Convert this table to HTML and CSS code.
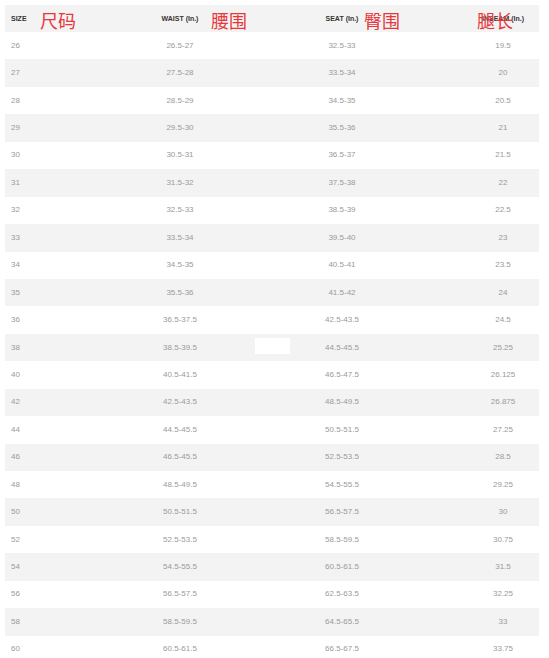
FILE: index.html
```html
<!DOCTYPE html>
<html lang="zh">
<head>
<meta charset="utf-8">
<title>Size chart</title>
<link rel="stylesheet" href="styles.css">
</head>
<body>
<div class="chart">
  <div class="row head">
    <div class="cell c1">SIZE</div>
    <div class="cell c2">WAIST (In.)</div>
    <div class="cell c3">SEAT (In.)</div>
    <div class="cell c4">INSEAM (In.)</div>
    <span class="note n1">尺码</span>
    <span class="note n2">腰围</span>
    <span class="note n3">臀围</span>
    <span class="note n4">腿长</span>
  </div>
  <div class="row"><div class="cell c1">26</div><div class="cell c2">26.5-27</div><div class="cell c3">32.5-33</div><div class="cell c4">19.5</div></div>
  <div class="row alt"><div class="cell c1">27</div><div class="cell c2">27.5-28</div><div class="cell c3">33.5-34</div><div class="cell c4">20</div></div>
  <div class="row"><div class="cell c1">28</div><div class="cell c2">28.5-29</div><div class="cell c3">34.5-35</div><div class="cell c4">20.5</div></div>
  <div class="row alt"><div class="cell c1">29</div><div class="cell c2">29.5-30</div><div class="cell c3">35.5-36</div><div class="cell c4">21</div></div>
  <div class="row"><div class="cell c1">30</div><div class="cell c2">30.5-31</div><div class="cell c3">36.5-37</div><div class="cell c4">21.5</div></div>
  <div class="row alt"><div class="cell c1">31</div><div class="cell c2">31.5-32</div><div class="cell c3">37.5-38</div><div class="cell c4">22</div></div>
  <div class="row"><div class="cell c1">32</div><div class="cell c2">32.5-33</div><div class="cell c3">38.5-39</div><div class="cell c4">22.5</div></div>
  <div class="row alt"><div class="cell c1">33</div><div class="cell c2">33.5-34</div><div class="cell c3">39.5-40</div><div class="cell c4">23</div></div>
  <div class="row"><div class="cell c1">34</div><div class="cell c2">34.5-35</div><div class="cell c3">40.5-41</div><div class="cell c4">23.5</div></div>
  <div class="row alt"><div class="cell c1">35</div><div class="cell c2">35.5-36</div><div class="cell c3">41.5-42</div><div class="cell c4">24</div></div>
  <div class="row"><div class="cell c1">36</div><div class="cell c2">36.5-37.5</div><div class="cell c3">42.5-43.5</div><div class="cell c4">24.5</div></div>
  <div class="row alt"><div class="cell c1">38</div><div class="cell c2">38.5-39.5</div><div class="cell c3">44.5-45.5</div><div class="cell c4">25.25</div><span class="patch"></span></div>
  <div class="row"><div class="cell c1">40</div><div class="cell c2">40.5-41.5</div><div class="cell c3">46.5-47.5</div><div class="cell c4">26.125</div></div>
  <div class="row alt"><div class="cell c1">42</div><div class="cell c2">42.5-43.5</div><div class="cell c3">48.5-49.5</div><div class="cell c4">26.875</div></div>
  <div class="row"><div class="cell c1">44</div><div class="cell c2">44.5-45.5</div><div class="cell c3">50.5-51.5</div><div class="cell c4">27.25</div></div>
  <div class="row alt"><div class="cell c1">46</div><div class="cell c2">46.5-45.5</div><div class="cell c3">52.5-53.5</div><div class="cell c4">28.5</div></div>
  <div class="row"><div class="cell c1">48</div><div class="cell c2">48.5-49.5</div><div class="cell c3">54.5-55.5</div><div class="cell c4">29.25</div></div>
  <div class="row alt"><div class="cell c1">50</div><div class="cell c2">50.5-51.5</div><div class="cell c3">56.5-57.5</div><div class="cell c4">30</div></div>
  <div class="row"><div class="cell c1">52</div><div class="cell c2">52.5-53.5</div><div class="cell c3">58.5-59.5</div><div class="cell c4">30.75</div></div>
  <div class="row alt"><div class="cell c1">54</div><div class="cell c2">54.5-55.5</div><div class="cell c3">60.5-61.5</div><div class="cell c4">31.5</div></div>
  <div class="row"><div class="cell c1">56</div><div class="cell c2">56.5-57.5</div><div class="cell c3">62.5-63.5</div><div class="cell c4">32.25</div></div>
  <div class="row alt"><div class="cell c1">58</div><div class="cell c2">58.5-59.5</div><div class="cell c3">64.5-65.5</div><div class="cell c4">33</div></div>
  <div class="row"><div class="cell c1">60</div><div class="cell c2">60.5-61.5</div><div class="cell c3">66.5-67.5</div><div class="cell c4">33.75</div></div>
</div>
</body>
</html>
```

FILE: styles.css
```css
html, body {
  margin: 0;
  padding: 0;
  background: #ffffff;
}

body {
  font-family: "Liberation Sans", Arial, sans-serif;
  overflow: hidden;
}

.chart {
  width: 534px;
  margin: 5px 0 0 5px;
}

.row {
  position: relative;
  display: grid;
  grid-template-columns: 94px 162px 162px 116px;
  align-items: center;
  height: 27.45px;
  font-size: 8px;
  color: #9a9a9a;
}

.row.alt,
.row.head {
  background: #f3f3f3;
}

.row.head {
  height: 27px;
  font-size: 7px;
  font-weight: bold;
  color: #333333;
}

.cell {
  white-space: nowrap;
  line-height: 10px;
}

.c1 {
  padding-left: 6px;
}

.c2,
.c3 {
  text-align: center;
}

.c4 {
  text-align: center;
  padding-left: 44px;
}

.note {
  position: absolute;
  top: 6px;
  font-family: "Noto Sans CJK SC", "Noto Sans", sans-serif;
  font-size: 18px;
  line-height: 18px;
  font-weight: normal;
  color: #e8373b;
}

.n1 { left: 35px; }
.n2 { left: 206px; }
.n3 { left: 359px; }
.n4 { left: 472px; }

.patch {
  position: absolute;
  left: 250px;
  top: 4px;
  width: 35px;
  height: 16px;
  background: #ffffff;
}
```
